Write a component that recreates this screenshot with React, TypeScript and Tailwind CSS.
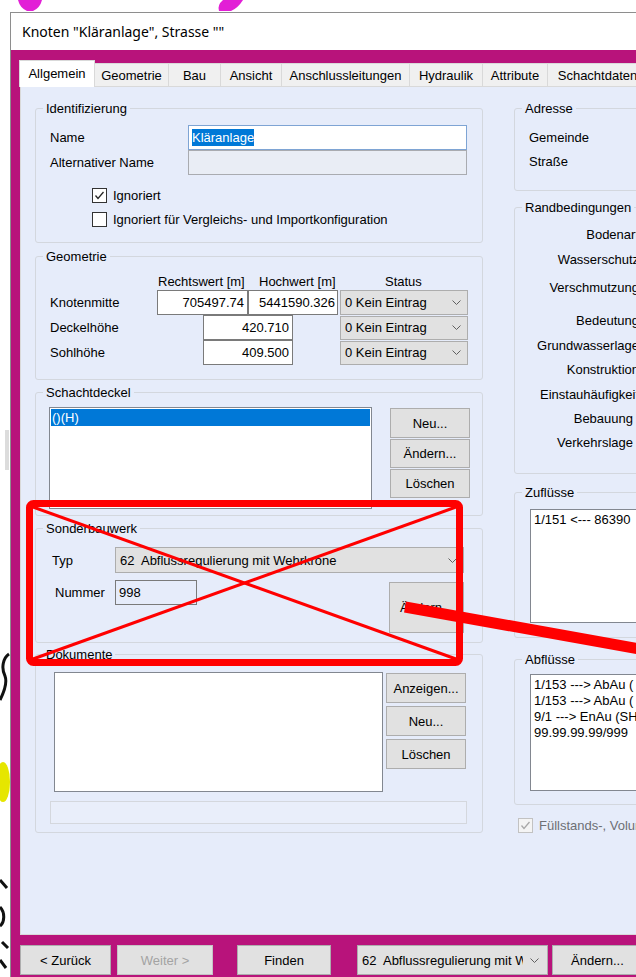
import React from 'react'

type Kids = { children?: React.ReactNode; className?: string }

function Chevron() {
  return (
    <svg width="9" height="5" viewBox="0 0 9 5" className="shrink-0 ml-auto">
      <polyline points="0.5,0.5 4.5,4.5 8.5,0.5" fill="none" stroke="#606060" strokeWidth="1" />
    </svg>
  )
}

function Group({ title, className = '', children }: Kids & { title: string }) {
  return (
    <fieldset className={`border border-[#d3d7de] rounded-[3px] ${className}`}>
      <legend className="ml-[7px] px-[3px] leading-[15px]">{title}</legend>
      {children}
    </fieldset>
  )
}

function Btn({ children, className = '', disabled = false }: Kids & { disabled?: boolean }) {
  return (
    <div
      className={`flex items-center justify-center border bg-[#e1e1e1] shrink-0 ${
        disabled ? 'border-[#c4c4c4] text-[#a3a3a3]' : 'border-[#adadad]'
      } ${className}`}
    >
      {children}
    </div>
  )
}

function Combo({ text, className = '', textClass = 'flex-1' }: { text: string; className?: string; textClass?: string }) {
  return (
    <div className={`flex items-center border border-[#adadad] bg-[#e1e1e1] pl-[4px] pr-[6px] shrink-0 ${className}`}>
      <span className={`overflow-hidden whitespace-pre ${textClass}`}>{text}</span>
      <Chevron />
    </div>
  )
}

function Check({ checked = false, disabled = false }: { checked?: boolean; disabled?: boolean }) {
  return (
    <div
      className={`w-[15px] h-[15px] border shrink-0 ${
        disabled ? 'border-[#c2c2c2] bg-[#f4f4f4]' : 'border-[#333333] bg-white'
      }`}
    >
      {checked && (
        <svg width="13" height="13" viewBox="0 0 13 13">
          <polyline
            points="2.5,6.5 5,9.5 10.5,3"
            fill="none"
            stroke={disabled ? '#a8a8a8' : '#262626'}
            strokeWidth="1.3"
          />
        </svg>
      )}
    </div>
  )
}

const tabs: [string, string][] = [
  ['Allgemein', 'w-[76px]'],
  ['Geometrie', 'w-[74px]'],
  ['Bau', 'w-[52px]'],
  ['Ansicht', 'w-[61px]'],
  ['Anschlussleitungen', 'w-[128px]'],
  ['Hydraulik', 'w-[73px]'],
  ['Attribute', 'w-[65px]'],
  ['Schachtdaten', 'w-[100px]'],
]

// Randbedingungen labels, right aligned; spacing follows the controls beside them
const boundary: [string, string][] = [
  ['Bodenart', 'mt-[12px]'],
  ['Wasserschutz', 'mt-[10px]'],
  ['Verschmutzung', 'mt-[13px]'],
  ['Bedeutung', 'mt-[18px]'],
  ['Grundwasserlage', 'mt-[10px]'],
  ['Konstruktion', 'mt-[9px]'],
  ['Einstauhäufigkeit', 'mt-[10px]'],
  ['Bebauung', 'mt-[9px] pr-[6px]'],
  ['Verkehrslage', 'mt-[9px] pr-[6px]'],
]

const outflows = [
  '1/153 ---> AbAu (',
  '1/153 ---> AbAu (',
  '9/1 ---> EnAu (SH',
  '99.99.99.99/999',
]

function LeftColumn() {
  return (
    <div className="flex flex-col w-[448px] shrink-0 pt-[14px]">
      <Group title="Identifizierung" className="h-[142px]">
        <div className="pl-[14px] pt-[9px]">
          <div className="flex items-center h-[25px]">
            <span className="w-[138px]">Name</span>
            <div className="flex items-center w-[279px] h-[25px] border border-[#7ea4d4] bg-white pl-[3px]">
              <span className="bg-[#0078d7] text-white leading-[17px]">Kläranlage</span>
            </div>
          </div>
          <div className="flex items-center h-[25px]">
            <span className="w-[138px]">Alternativer Name</span>
            <div className="w-[279px] h-[25px] border border-[#a9abb0] bg-[#e9edf5]" />
          </div>
          <div className="flex items-center gap-[6px] h-[16px] mt-[12px] ml-[42px]">
            <Check checked />
            <span>Ignoriert</span>
          </div>
          <div className="flex items-center gap-[6px] h-[16px] mt-[8px] ml-[42px]">
            <Check />
            <span>Ignoriert für Vergleichs- und Importkonfiguration</span>
          </div>
        </div>
      </Group>

      <Group title="Geometrie" className="h-[131px] mt-[6px]">
        <div className="pl-[14px] pt-[10px]">
          <div className="flex h-[15px]">
            <span className="w-[108px]" />
            <span className="w-[101px]">Rechtswert [m]</span>
            <span className="w-[126px]">Hochwert [m]</span>
            <span>Status</span>
          </div>
          <div className="flex items-center h-[25px] mt-[1px]">
            <span className="w-[107px]">Knotenmitte</span>
            <div className="w-[91px] h-[25px] border border-[#7a7a7a] bg-white text-right pr-[3px] leading-[23px]">705497.74</div>
            <div className="w-[90px] h-[25px] border border-[#7a7a7a] bg-white text-right pr-[2px] leading-[23px]">5441590.326</div>
            <Combo text="0 Kein Eintrag" className="ml-[2px] w-[128px] h-[25px]" />
          </div>
          <div className="flex items-center h-[25px]">
            <span className="w-[153px]">Deckelhöhe</span>
            <div className="w-[90px] h-[25px] border border-[#7a7a7a] bg-white text-right pr-[3px] leading-[23px]">420.710</div>
            <Combo text="0 Kein Eintrag" className="ml-[47px] w-[128px] h-[24px]" />
          </div>
          <div className="flex items-center h-[25px]">
            <span className="w-[153px]">Sohlhöhe</span>
            <div className="w-[90px] h-[25px] border border-[#7a7a7a] bg-white text-right pr-[3px] leading-[23px]">409.500</div>
            <Combo text="0 Kein Eintrag" className="ml-[47px] w-[128px] h-[24px]" />
          </div>
        </div>
      </Group>

      <Group title="Schachtdeckel" className="h-[131px] mt-[5px]">
        <div className="flex pl-[13px] pt-[7px]">
          <div className="w-[323px] h-[102px] border border-[#828790] bg-white p-[1px]">
            <div className="h-[17px] bg-[#0078d7] text-white pl-[1px] leading-[17px]">()(H)</div>
          </div>
          <div className="flex flex-col gap-[1px] ml-[18px] mt-[1px]">
            <Btn className="w-[80px] h-[30px]">Neu...</Btn>
            <Btn className="w-[80px] h-[29px]">Ändern...</Btn>
            <Btn className="w-[80px] h-[29px]">Löschen</Btn>
          </div>
        </div>
      </Group>

      <Group title="Sonderbauwerk" className="h-[122px] mt-[5px]">
        <div className="pt-[11px]">
          <div className="flex items-center h-[26px]">
            <span className="w-[79px] pl-[16px]">Typ</span>
            <Combo text="62  Abflussregulierung mit Wehrkrone" className="w-[349px] h-[26px]" />
          </div>
          <div className="flex items-start mt-[7px]">
            <div className="flex items-center h-[25px]">
              <span className="w-[79px] pl-[19px]">Nummer</span>
              <div className="w-[82px] h-[25px] border border-[#7a7a7a] pl-[3px] leading-[23px]">998</div>
            </div>
            <Btn className="ml-[192px] mt-[2px] w-[75px] h-[51px]">Ändern...</Btn>
          </div>
        </div>
      </Group>

      <Group title="Dokumente" className="h-[186px] mt-[4px]">
        <div className="flex pl-[18px] pt-[10px]">
          <div className="w-[329px] h-[120px] border border-[#828790] bg-white" />
          <div className="flex flex-col gap-[3px] ml-[3px] mt-[1px]">
            <Btn className="w-[80px] h-[30px]">Anzeigen...</Btn>
            <Btn className="w-[80px] h-[30px]">Neu...</Btn>
            <Btn className="w-[80px] h-[30px]">Löschen</Btn>
          </div>
        </div>
        <div className="ml-[14px] mt-[9px] w-[417px] h-[23px] border border-[#d4d7dd] bg-[#e9eefa]" />
      </Group>
    </div>
  )
}

function RightColumn() {
  return (
    <div className="flex flex-col w-[200px] shrink-0 ml-[31px] pt-[14px]">
      <Group title="Adresse" className="h-[90px]">
        <div className="pl-[14px] pt-[14px]">
          <div>Gemeinde</div>
          <div className="mt-[9px]">Straße</div>
        </div>
      </Group>

      <Group title="Randbedingungen" className="h-[274px] mt-[9px]">
        <div className="flex flex-col items-end w-[124px]">
          {boundary.map(([label, cls]) => (
            <div key={label} className={`whitespace-nowrap ${cls}`}>
              {label}
            </div>
          ))}
        </div>
      </Group>

      <Group title="Zuflüsse" className="h-[153px] mt-[11px]">
        <div className="pl-[15px] pt-[9px]">
          <div className="w-[200px] h-[114px] border border-[#828790] bg-white pl-[3px] pt-[2px] whitespace-nowrap">
            1/151 &lt;--- 86390
          </div>
        </div>
      </Group>

      <Group title="Abflüsse" className="h-[153px] mt-[14px]">
        <div className="pl-[15px] pt-[7px]">
          <div className="w-[200px] h-[117px] border border-[#828790] bg-white pl-[3px] pt-[2px] leading-[16px] whitespace-nowrap">
            {outflows.map((line, i) => (
              <div key={i}>{line}</div>
            ))}
          </div>
        </div>
      </Group>

      <div className="flex items-center gap-[6px] h-[15px] mt-[13px] ml-[4px] text-[#6d6f75] whitespace-nowrap">
        <Check checked disabled />
        <span>Füllstands-, Volumen</span>
      </div>
    </div>
  )
}

export default function App() {
  return (
    <div className="relative w-[636px] h-[977px] overflow-hidden bg-white flex flex-col font-['Liberation_Sans',Arial,sans-serif] text-[13px] leading-[15px] text-black">
      {/* desktop showing above the window */}
      <div className="relative h-[12px] shrink-0">
        <svg className="absolute left-0 top-0" width="636" height="12">
          <path d="M18,0 L42,0 Q40,8 33,11 L27,11 Q20,8 18,0 Z" fill="#e21fd6" />
          <path d="M223,0 L243,0 Q238,8 231,11 L219,11 Q217,5 223,0 Z" fill="#e21fd6" />
        </svg>
      </div>

      <div className="flex flex-1">
        {/* desktop strip left of the window */}
        <div className="relative w-[10px] shrink-0">
          <svg className="absolute left-0 top-0" width="10" height="965">
            <rect x="5" y="418" width="4" height="40" fill="#dcdcdc" />
            <path d="M9,642 C3,646 1,656 5,664 C8,672 3,682 0,688" fill="none" stroke="#111" strokeWidth="3" />
            <ellipse cx="3" cy="770" rx="7" ry="20" fill="#e6e600" />
            <path d="M0,868 L7,876 M0,895 C5,900 5,910 0,914 M2,930 L8,936 M0,948 L6,956" stroke="#111" strokeWidth="3" fill="none" />
          </svg>
        </div>

        <div className="flex flex-col flex-1 border-l border-t border-[#8e8e8e]">
          <div className="h-[37px] shrink-0 bg-white flex items-center pl-[11px] font-['Noto_Sans',sans-serif] text-[14px]">
            {'Knoten "Kläranlage", Strasse ""'}
          </div>

          <div className="flex flex-col flex-1 bg-[#b8137b] pt-[10px] pl-[8px]">
            <div className="flex items-end h-[26px] shrink-0">
              {tabs.map(([label, w], i) =>
                i === 0 ? (
                  <div
                    key={label}
                    className={`${w} h-[27px] -mb-px relative z-10 flex items-center justify-center pb-[1px] bg-white border border-b-0 border-[#d9d9d9] shrink-0`}
                  >
                    {label}
                  </div>
                ) : (
                  <div
                    key={label}
                    className={`${w} h-[23px] flex items-center justify-center bg-[#f0f0f0] border-t border-r border-[#d9d9d9] shrink-0 whitespace-nowrap`}
                  >
                    {label}
                  </div>
                )
              )}
            </div>

            <div className="flex flex-1 ml-[1px] pl-[14px] border border-r-0 border-[#d9d9d9] bg-[#e6ecfa] overflow-hidden">
              <LeftColumn />
              <RightColumn />
            </div>

            <div className="flex items-start h-[42px] shrink-0 pt-[10px] pl-[1px]">
              <Btn className="w-[91px] h-[30px]">&lt; Zurück</Btn>
              <Btn disabled className="ml-[6px] w-[96px] h-[30px]">Weiter &gt;</Btn>
              <Btn className="ml-[24px] w-[94px] h-[30px]">Finden</Btn>
              <Combo
                text="62  Abflussregulierung mit Wehrkrone"
                textClass="w-[161px]"
                className="ml-[26px] w-[191px] h-[30px] pr-[8px]"
              />
              <Btn className="ml-[4px] w-[90px] h-[30px] justify-start pl-[18px]">Ändern...</Btn>
            </div>
          </div>
        </div>
      </div>

      {/* red markup drawn on top of the dialog */}
      <svg className="absolute left-0 top-0 pointer-events-none" width="636" height="977">
        <rect x="29.5" y="503.5" width="430" height="159" rx="4" fill="none" stroke="#ff0000" strokeWidth="7" />
        <line x1="33" y1="507" x2="456" y2="659" stroke="#ff0000" strokeWidth="3" />
        <line x1="456" y1="507" x2="33" y2="659" stroke="#ff0000" strokeWidth="3" />
        <line x1="405" y1="607" x2="645" y2="650" stroke="#ff0000" strokeWidth="11" />
      </svg>
    </div>
  )
}
